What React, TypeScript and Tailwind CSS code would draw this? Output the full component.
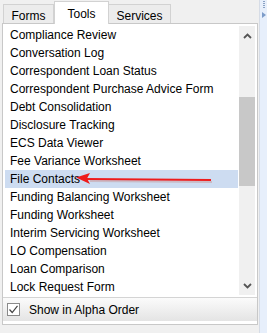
import React from "react";

const ITEMS = [
  "Compliance Review",
  "Conversation Log",
  "Correspondent Loan Status",
  "Correspondent Purchase Advice Form",
  "Debt Consolidation",
  "Disclosure Tracking",
  "ECS Data Viewer",
  "Fee Variance Worksheet",
  "File Contacts",
  "Funding Balancing Worksheet",
  "Funding Worksheet",
  "Interim Servicing Worksheet",
  "LO Compensation",
  "Loan Comparison",
  "Lock Request Form",
];

function Chevron({ down }: { down?: boolean }) {
  return (
    <svg width="9" height="6" viewBox="0 0 9 6">
      <path
        d={down ? "M1 1 L4.5 4.5 L8 1" : "M1 5 L4.5 1.5 L8 5"}
        fill="none"
        stroke="#555"
        strokeWidth="1.8"
      />
    </svg>
  );
}

export default function App() {
  return (
    <div
      className="relative flex w-[267px] h-[333px] overflow-hidden bg-[#f0f0f0] text-[12px] text-black"
      style={{ fontFamily: '"Liberation Sans", Arial, sans-serif' }}
    >
      {/* main column */}
      <div className="w-[259px] pl-[2px] pr-[1px]">
        {/* tabs */}
        <div className="flex items-end h-[23px] pl-[1px]">
          <div className="w-[51px] h-[19px] flex items-center justify-center pt-[3px] bg-[#ececec] border border-b-0 border-[#d2d2d2]">
            Forms
          </div>
          <div className="relative z-10 w-[55px] h-[23px] mb-[-1px] flex justify-center pt-[3px] bg-white border border-b-0 border-[#d2d2d2]">
            Tools
          </div>
          <div className="w-[62px] h-[19px] flex items-center justify-center pt-[3px] bg-[#ececec] border border-b-0 border-l-0 border-[#d2d2d2]">
            Services
          </div>
        </div>

        {/* panel */}
        <div className="border border-[#c8c8c8] bg-white">
          <div className="flex h-[273px] pt-[2px] pl-[2px] pr-[2px]">
            <div className="flex-1 flex flex-col">
              {ITEMS.map((item) => (
                <div
                  key={item}
                  className={`h-[18px] leading-[18px] pl-[5px] whitespace-nowrap overflow-hidden ${
                    item === "File Contacts" ? "bg-[#cddcf1]" : ""
                  }`}
                >
                  {item}
                </div>
              ))}
            </div>
            {/* scrollbar */}
            <div className="w-[16px] ml-[1px] h-[269px] bg-[#f0f0f0] flex flex-col items-center">
              <div className="h-[17px] flex items-center justify-center pt-[2px]">
                <Chevron />
              </div>
              <div className="h-[54px]" />
              <div className="w-[16px] h-[89px] bg-[#c8c8c8]" />
              <div className="flex-1" />
              <div className="h-[17px] flex items-center justify-center pb-[2px]">
                <Chevron down />
              </div>
            </div>
          </div>
          <div className="border-t border-[#d4d4d4] h-[24px] flex items-center pl-[4px] gap-[9px] bg-gradient-to-b from-[#fbfbfb] to-[#e4e4e4]">
            <div className="w-[13px] h-[13px] border border-[#8a8a8a] bg-white flex items-center justify-center">
              <svg width="11" height="11" viewBox="0 0 11 11">
                <path d="M1.5 5.5 L4.2 8.5 L9.5 1.8" fill="none" stroke="#444" strokeWidth="1.2" />
              </svg>
            </div>
            <span>Show in Alpha Order</span>
          </div>
          <div className="h-[3px] bg-white" />
        </div>
      </div>

      {/* right strip */}
      <div className="flex-1 bg-[#e7effb] border-l border-[#d6dce6] flex flex-col items-center pt-[1px]">
        <div className="flex flex-col gap-[1px]">
          {[0, 1, 2, 3].map((i) => (
            <div key={i} className="w-[2px] h-[1px] bg-[#8aa2c4]" />
          ))}
        </div>
        <svg width="4" height="6" viewBox="0 0 4 6" className="mt-[4px]">
          <path d="M0 0 L4 3 L0 6 Z" fill="#7d9cc9" />
        </svg>
      </div>

      {/* red arrow overlay */}
      <svg
        className="absolute left-0 top-0 pointer-events-none"
        width="267"
        height="333"
        viewBox="0 0 267 333"
      >
        <path d="M90 181 L212 182" stroke="#c89a9a" strokeWidth="2" opacity="0.5" />
        <path d="M86 179 L211 180" stroke="#ee1c1c" strokeWidth="2" />
        <path d="M76 177.5 L90 173 L87 178.5 L90 184 Z" fill="#ee1c1c" />
      </svg>
    </div>
  );
}
